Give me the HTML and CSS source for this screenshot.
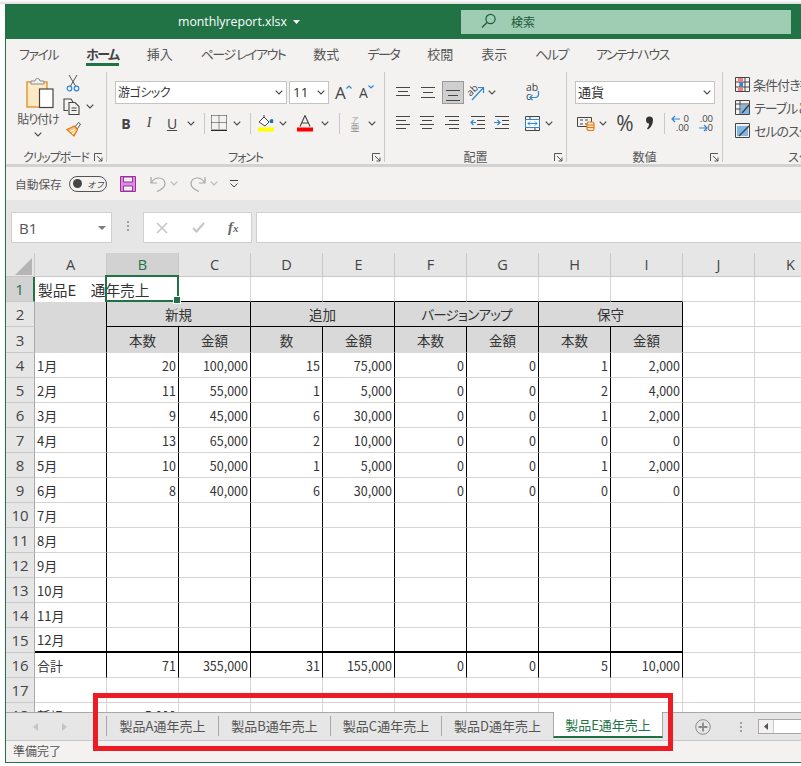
FILE: index.html
```html
<!DOCTYPE html>
<html lang="ja">
<head>
<meta charset="utf-8">
<title>monthlyreport.xlsx</title>
<link rel="stylesheet" href="styles.css">
</head>
<body>
<div class="edge"></div>
<div class="win">
  <header class="title">
    <div class="fname">monthlyreport.xlsx<svg class="caret" width="7" height="4" viewBox="0 0 7 4"><path d="M0 0h7L3.5 4z" fill="#fff"/></svg></div>
    <div class="search">
      <svg width="16" height="16" viewBox="0 0 16 16" fill="none" stroke="#1d5a38" stroke-width="1.2"><circle cx="9.5" cy="6" r="4.6"/><path d="M6 9.5L1 14.5"/></svg>
      <span>検索</span>
    </div>
  </header>
  <nav class="tabs">
    <span class="k">ファイル</span><span class="on k">ホーム</span><span>挿入</span><span class="k">ページ レイアウト</span><span>数式</span><span class="k">データ</span><span>校閲</span><span>表示</span><span class="k">ヘルプ</span><span class="k">アンテナハウス</span>
  </nav>

  <section class="ribbon">
    <div class="grp g-clip">
      <div class="clip-body">
        <div class="paste">
          <svg width="28" height="32" viewBox="0 0 28 32"><rect x="1" y="4" width="20" height="25" fill="#fde9c4" stroke="#e38a1f" stroke-width="1.3"/><path d="M5 6V3h4a2.5 2.5 0 0 1 5 0h4v3z" fill="#f3f2f1" stroke="#8a8a8a"/><rect x="13.5" y="11" width="13.5" height="18.5" fill="#fff" stroke="#444" stroke-width="1.2"/></svg>
          <span>貼り付け</span>
          <svg class="chev" width="8" height="5" viewBox="0 0 8 5"><path d="M.7.7L4 4l3.3-3.3"/></svg>
        </div>
        <div class="clip-side">
          <svg width="14" height="17" viewBox="0 0 14 17" fill="none" stroke="#555"><path d="M3 0l6.5 11M11 0L4.500 11"/><circle cx="3.500" cy="13.500" r="2.300" stroke="#2b88d8" stroke-width="1.200"/><circle cx="10.500" cy="13.500" r="2.300" stroke="#2b88d8" stroke-width="1.200"/></svg>
          <div class="side-row">
            <svg width="18" height="17" viewBox="0 0 18 17" fill="none" stroke="#444" stroke-width="1.100"><path d="M5 12.500H1V1h7l2 3"/><path d="M6 4.500h6l4 4v8H6z" fill="#f3f2f1"/><path d="M8.500 10h5M8.500 12.500h5"/></svg>
            <svg class="chev" width="8" height="5" viewBox="0 0 8 5"><path d="M.7.7L4 4l3.3-3.3"/></svg>
          </div>
          <svg width="17" height="16" viewBox="0 0 17 16"><path d="M9 6l3.500-4.500 2 1.500-3 4.700z" fill="#fff" stroke="#555"/><path d="M1 8.500L8.500 5l3 3.500L8 15z" fill="#f8c27a" stroke="#e07b16" stroke-width="1.200"/><path d="M4 10.500l5-2M6 13l3.500-3" stroke="#fff"/></svg>
        </div>
      </div>
      <div class="glabel k-label">クリップボード</div>
      <svg class="launch" width="9" height="9" viewBox="0 0 9 9" fill="none" stroke="#555"><path d="M.5 8V.5H8M3 3l5 5M8 4.500V8H4.500"/></svg>
    </div>

    <div class="grp g-font">
      <div class="row r1">
        <div class="select s-font"><span>游ゴシック</span><svg class="chev" width="8" height="5" viewBox="0 0 8 5"><path d="M.7.7L4 4l3.300-3.300"/></svg></div>
        <div class="select s-size"><span>11</span><svg class="chev" width="8" height="5" viewBox="0 0 8 5"><path d="M.7.7L4 4l3.300-3.300"/></svg></div>
        <div class="bigA a-up">A<svg width="6" height="4" viewBox="0 0 6 4" fill="none" stroke="#2b88d8" stroke-width="1.200"><path d="M.5 3.500L3 1l2.500 2.500"/></svg></div>
        <div class="bigA a-down">A<svg width="6" height="4" viewBox="0 0 6 4" fill="none" stroke="#2b88d8" stroke-width="1.200"><path d="M.5.5L3 3 5.500.5"/></svg></div>
      </div>
      <div class="row r2">
        <b class="c w22 fb">B</b><i class="c w24 fi">I</i><u class="c w22 fu">U</u>
        <span class="c w16"><svg class="chev" width="8" height="5" viewBox="0 0 8 5"><path d="M.7.7L4 4l3.300-3.300"/></svg></span>
        <span class="c w10"><i class="sep"></i></span>
        <span class="c w20"><svg width="16" height="16" viewBox="0 0 16 16" fill="none" stroke="#333" stroke-dasharray="1 1"><path d="M.5.5h15M.5.5v14M15.500.5v14M8 .5v14M.5 7.500h15"/><path d="M0 15.300h16" stroke="#111" stroke-width="1.200" stroke-dasharray="none"/></svg></span>
        <span class="c w16"><svg class="chev" width="8" height="5" viewBox="0 0 8 5"><path d="M.7.7L4 4l3.300-3.300"/></svg></span>
        <span class="c w10"><i class="sep"></i></span>
        <span class="c w22"><svg width="16" height="17" viewBox="0 0 16 17"><path d="M1 7l5-5 5 5-4 4z" fill="#fff" stroke="#444"/><path d="M6 2V0" stroke="#444"/><path d="M12 8c-1-2 0-4 2-4s1 4 1 4z" fill="#1f6fb5"/><rect y="12.500" width="16" height="4" fill="#ffff00"/></svg></span>
        <span class="c w12"><svg class="chev" width="8" height="5" viewBox="0 0 8 5"><path d="M.7.7L4 4l3.300-3.300"/></svg></span>
        <span class="c w32"><svg width="16" height="17" viewBox="0 0 16 17" fill="none" stroke="#444" stroke-width="1.100"><path d="M3 11.500L8 .5l5 11M5 8h6"/><rect y="12.500" width="16" height="4" fill="#ff0000" stroke="none"/></svg></span>
        <span class="c w8"><svg class="chev" width="8" height="5" viewBox="0 0 8 5"><path d="M.7.7L4 4l3.300-3.300"/></svg></span>
        <span class="c w20"><i class="sep"></i></span>
        <span class="c w12 phon"><span class="kana">ア</span><span class="kanji">亜</span></span>
        <span class="c w22"><svg class="chev" width="8" height="5" viewBox="0 0 8 5"><path d="M.7.7L4 4l3.300-3.300"/></svg></span>
      </div>
      <div class="glabel k-label">フォント</div>
      <svg class="launch" width="9" height="9" viewBox="0 0 9 9" fill="none" stroke="#555"><path d="M.5 8V.5H8M3 3l5 5M8 4.500V8H4.500"/></svg>
    </div>

    <div class="grp g-align">
      <div class="al-body">
        <div class="al-left">
          <div class="row r1">
            <span class="c w22"><svg width="15" height="16" viewBox="0 0 15 16" stroke="#444"><path d="M0 2.500h14M2 6.500h10M0 10.500h14"/></svg></span>
            <span class="c w28"><svg width="15" height="16" viewBox="0 0 15 16" stroke="#444"><path d="M0 2.500h14M2 7.500h10M0 12.500h14"/></svg></span>
            <span class="c w22 sel"><svg width="15" height="16" viewBox="0 0 15 16" stroke="#444"><path d="M0 5.500h14M2 10.500h10M0 15.500h14"/></svg></span>
            <span class="c w24"><svg width="18" height="16" viewBox="0 0 18 16" fill="none"><text x="0" y="9" class="ab" transform="rotate(-45 5 6)">ab</text><path d="M5 15L16 3M11 2.500h5.500V8" stroke="#2b88d8" stroke-width="1.200"/></svg></span>
            <span class="c w8"><svg class="chev" width="8" height="5" viewBox="0 0 8 5"><path d="M.7.7L4 4l3.300-3.300"/></svg></span>
          </div>
          <div class="row r2">
            <span class="c w22"><svg width="15" height="14" viewBox="0 0 15 14" stroke="#444"><path d="M0 .5h14M0 4.500h10M0 8.500h14M0 12.500h10"/></svg></span>
            <span class="c w26"><svg width="15" height="14" viewBox="0 0 15 14" stroke="#444"><path d="M0 .5h14M2 4.500h10M0 8.500h14M2 12.500h10"/></svg></span>
            <span class="c w24"><svg width="15" height="14" viewBox="0 0 15 14" stroke="#444"><path d="M0 .5h14M4 4.500h10M0 8.500h14M4 12.500h10"/></svg></span>
            <span class="c w26"><svg width="15" height="14" viewBox="0 0 15 14" fill="none" stroke="#444"><path d="M1 .5h14M7 4.500h8M7 8.500h8M1 12.500h14"/><path d="M6 6.500H1M3.500 4L1 6.500 3.500 9" stroke="#2b88d8" stroke-width="1.200"/></svg></span>
            <span class="c w22"><svg width="15" height="14" viewBox="0 0 15 14" fill="none" stroke="#444"><path d="M1 .5h14M8 4.500h7M8 8.500h7M1 12.500h14"/><path d="M0 6.500h6M3.500 4L6 6.500 3.500 9" stroke="#2b88d8" stroke-width="1.200"/></svg></span>
          </div>
        </div>
        <i class="sep tall"></i>
        <div class="al-right">
          <div class="wrap-ic"><span class="wl">ab</span><span class="wl">c</span><svg width="12" height="10" viewBox="0 0 12 10" fill="none" stroke="#2b88d8" stroke-width="1.200"><path d="M10.500 0v3.500a3 3 0 0 1-3 3H2M4.500 4L2 6.500 4.500 9"/></svg></div>
          <div class="row r2b">
            <span class="c w22"><svg width="15" height="15" viewBox="0 0 15 15" fill="none" stroke="#444"><path d="M.5.5h14v14H.5zM.5 3.500h14M.5 11.500h14M5 .5v3M10 11.500v3"/><rect x=".5" y="3.500" width="14" height="8" fill="#fff" stroke="#2b88d8"/><path d="M3 7.500h9M5 5.500l-2 2 2 2M10 5.500l2 2-2 2" stroke="#2b88d8"/></svg></span>
            <span class="c w12"><svg class="chev" width="8" height="5" viewBox="0 0 8 5"><path d="M.7.7L4 4l3.300-3.300"/></svg></span>
          </div>
        </div>
      </div>
      <div class="glabel">配置</div>
      <svg class="launch" width="9" height="9" viewBox="0 0 9 9" fill="none" stroke="#555"><path d="M.5 8V.5H8M3 3l5 5M8 4.500V8H4.500"/></svg>
    </div>

    <div class="grp g-num">
      <div class="row r1"><div class="select s-num"><span>通貨</span><svg class="chev" width="8" height="5" viewBox="0 0 8 5"><path d="M.7.7L4 4l3.300-3.300"/></svg></div></div>
      <div class="row r2">
        <span class="c w22"><svg width="18" height="15" viewBox="0 0 18 15" fill="none"><path d="M.5 1.500h14v9H.5z" stroke="#444"/><path d="M3 4h3M3 8h3M8 4h3M8 8h3" stroke="#444"/><rect x="10" y="6" width="7" height="8.500" rx="2" fill="#fbe3c5" stroke="#e07b16" stroke-width="1.200"/><path d="M10 9h7M10 11.500h7" stroke="#e07b16"/></svg></span>
        <span class="c w12"><svg class="chev" width="8" height="5" viewBox="0 0 8 5"><path d="M.7.7L4 4l3.300-3.300"/></svg></span>
        <span class="c w32 pct">%</span>
        <span class="c w16"><svg width="9" height="14" viewBox="0 0 9 14"><path d="M1 4a3.500 3.500 0 1 1 7 0c0 4-2 7.500-5 9.500L2 12.500c1.500-1.500 2-3 2-5C2 7.500 1 6 1 4z" fill="#333"/></svg></span>
        <span class="c w14"><i class="sep"></i></span>
        <span class="c w18 dec"><span class="dt">0</span><span class="db">.00</span><svg class="arr" width="9" height="8" viewBox="0 0 9 8" fill="none" stroke="#2b88d8" stroke-width="1.200"><path d="M9 4H1M4 1L1 4l3 3"/></svg></span>
        <span class="c w30 dec dec2"><span class="dt">.00</span><span class="db">.0</span><svg class="arr" width="9" height="8" viewBox="0 0 9 8" fill="none" stroke="#2b88d8" stroke-width="1.200"><path d="M0 4h8M5 1l3 3-3 3"/></svg></span>
      </div>
      <div class="glabel">数値</div>
      <svg class="launch" width="9" height="9" viewBox="0 0 9 9" fill="none" stroke="#555"><path d="M.5 8V.5H8M3 3l5 5M8 4.500V8H4.500"/></svg>
    </div>

    <div class="grp g-style">
      <div class="sty"><svg width="15" height="15" viewBox="0 0 15 15" fill="none" stroke="#444"><path d="M.5.500h14v14H.500zM.500 5h14M.500 10h14M5 .500v14M10 .500v14"/><rect x="3" y="1" width="5" height="4" fill="#f08080" stroke="none"/><rect x="3" y="10" width="5" height="4" fill="#f08080" stroke="none"/><rect x="5" y="5" width="3" height="5" fill="#2b88d8" stroke="none"/></svg><span>条件付き書式</span></div>
      <div class="sty"><svg width="16" height="15" viewBox="0 0 16 15" fill="none" stroke="#444"><path d="M.5.500h14v14H.500zM.500 4h14M5 .500v14M.500 9h5"/><rect x="6" y="5" width="8" height="9" fill="#7fb8e6" stroke="none"/><path d="M7 13l7-8" stroke="#444" stroke-width="1.500"/></svg><span>テーブルとして書式設定</span></div>
      <div class="sty"><svg width="16" height="15" viewBox="0 0 16 15" fill="none" stroke="#444"><path d="M.5.500h14v14H.500z"/><rect x="2" y="3" width="11" height="10" fill="#7fb8e6" stroke="none"/><path d="M4 13l10-10" stroke="#444" stroke-width="1.500"/></svg><span>セルのスタイル</span></div>
      <div class="glabel">スタイル</div>
    </div>
  </section>

  <div class="qat">
    <span class="auto">自動保存</span>
    <span class="toggle"><i></i><em>オフ</em></span>
    <svg class="q-save" width="16" height="16" viewBox="0 0 16 16"><path d="M.5.500h15v15H.500z" fill="#d58fd6" stroke="#a02ba5"/><path d="M3.500 1h9v5h-9z" fill="#f3f2f1" stroke="#a02ba5"/><path d="M3.500 15v-5h9v5z" fill="#f3f2f1" stroke="#a02ba5"/></svg>
    <svg class="q-undo" width="16" height="16" viewBox="0 0 16 16" fill="none" stroke="#a6a6a6" stroke-width="1.200"><path d="M1 1v6h6"/><path d="M1.500 6.500C3 3.500 6 2 9 2c3.500 0 6 2.500 6 5.500 0 3-3 6-8 8"/></svg>
    <svg class="chev q-c1" width="8" height="5" viewBox="0 0 8 5"><path d="M.7.7L4 4l3.300-3.300"/></svg>
    <svg class="q-redo" width="16" height="16" viewBox="0 0 16 16" fill="none" stroke="#a6a6a6" stroke-width="1.200"><path d="M15 1v6H9"/><path d="M14.500 6.500C13 3.500 10 2 7 2 3.500 2 1 4.500 1 7.500c0 3 3 6 8 8"/></svg>
    <svg class="chev q-c2" width="8" height="5" viewBox="0 0 8 5"><path d="M.7.7L4 4l3.300-3.300"/></svg>
    <svg class="q-more" width="8" height="8" viewBox="0 0 8 8" fill="none" stroke="#444"><path d="M0 .5h8"/><path d="M.5 3.500L4 7l3.500-3.500"/></svg>
  </div>

  <div class="fbar">
    <div class="namebox"><span>B1</span><svg width="8" height="4" viewBox="0 0 8 4"><path d="M0 0h8L4 4z" fill="#7a7a7a"/></svg></div>
    <div class="dots"><i></i><i></i><i></i></div>
    <div class="fxbox">
      <svg width="12" height="12" viewBox="0 0 12 12" fill="none" stroke="#c4c4c4" stroke-width="1.500"><path d="M1 1l10 10M11 1L1 11"/></svg>
      <svg width="13" height="11" viewBox="0 0 13 11" fill="none" stroke="#c4c4c4" stroke-width="2"><path d="M1 6l3.500 3.500L12 1"/></svg>
      <span class="fx">f<small>x</small></span>
    </div>
    <div class="finput"></div>
  </div>

  <div class="sheet">
    <table class="grid">
      <colgroup><col class="ch"><col class="cc"><col class="cc"><col class="cc"><col class="cc"><col class="cc"><col class="cc"><col class="cc"><col class="cc"><col class="cc"><col class="cc"><col class="cc"></colgroup>
      <thead>
        <tr class="hd"><th class="corner"><svg width="17" height="17" viewBox="0 0 17 17"><path d="M17 0v17H0z" fill="#b5b5b5"/></svg></th><th>A</th><th class="hsel">B</th><th>C</th><th>D</th><th>E</th><th>F</th><th>G</th><th>H</th><th>I</th><th>J</th><th>K</th></tr>
      </thead>
      <tbody>
        <tr><th class="rsel">1</th><td class="t a1">製品E　通年売上</td><td class="top selc"><i class="cursor"></i></td><td class="top"></td><td class="top"></td><td class="top"></td><td class="top"></td><td class="top"></td><td class="top"></td><td class="top"></td><td></td><td></td></tr>
        <tr class="h1"><th>2</th><td class="gray" rowspan="2"></td><td class="hc" colspan="2">新規</td><td class="hc" colspan="2">追加</td><td class="hc hk" colspan="2">バージョンアップ</td><td class="hc" colspan="2">保守</td><td></td><td></td></tr>
        <tr class="h2"><th>3</th><td class="hc2">本数</td><td class="hc2">金額</td><td class="hc2">数</td><td class="hc2">金額</td><td class="hc2">本数</td><td class="hc2">金額</td><td class="hc2">本数</td><td class="hc2">金額</td><td></td><td></td></tr>
        <tr class="d"><th>4</th><td>1月</td><td>20</td><td>100,000</td><td>15</td><td>75,000</td><td>0</td><td>0</td><td>1</td><td>2,000</td><td></td><td></td></tr>
        <tr class="d"><th>5</th><td>2月</td><td>11</td><td>55,000</td><td>1</td><td>5,000</td><td>0</td><td>0</td><td>2</td><td>4,000</td><td></td><td></td></tr>
        <tr class="d"><th>6</th><td>3月</td><td>9</td><td>45,000</td><td>6</td><td>30,000</td><td>0</td><td>0</td><td>1</td><td>2,000</td><td></td><td></td></tr>
        <tr class="d"><th>7</th><td>4月</td><td>13</td><td>65,000</td><td>2</td><td>10,000</td><td>0</td><td>0</td><td>0</td><td>0</td><td></td><td></td></tr>
        <tr class="d"><th>8</th><td>5月</td><td>10</td><td>50,000</td><td>1</td><td>5,000</td><td>0</td><td>0</td><td>1</td><td>2,000</td><td></td><td></td></tr>
        <tr class="d"><th>9</th><td>6月</td><td>8</td><td>40,000</td><td>6</td><td>30,000</td><td>0</td><td>0</td><td>0</td><td>0</td><td></td><td></td></tr>
        <tr class="d"><th>10</th><td>7月</td><td></td><td></td><td></td><td></td><td></td><td></td><td></td><td></td><td></td><td></td></tr>
        <tr class="d"><th>11</th><td>8月</td><td></td><td></td><td></td><td></td><td></td><td></td><td></td><td></td><td></td><td></td></tr>
        <tr class="d"><th>12</th><td>9月</td><td></td><td></td><td></td><td></td><td></td><td></td><td></td><td></td><td></td><td></td></tr>
        <tr class="d"><th>13</th><td>10月</td><td></td><td></td><td></td><td></td><td></td><td></td><td></td><td></td><td></td><td></td></tr>
        <tr class="d"><th>14</th><td>11月</td><td></td><td></td><td></td><td></td><td></td><td></td><td></td><td></td><td></td><td></td></tr>
        <tr class="d last"><th>15</th><td>12月</td><td></td><td></td><td></td><td></td><td></td><td></td><td></td><td></td><td></td><td></td></tr>
        <tr class="d"><th>16</th><td>合計</td><td>71</td><td>355,000</td><td>31</td><td>155,000</td><td>0</td><td>0</td><td>5</td><td>10,000</td><td></td><td></td></tr>
        <tr class="p"><th>17</th><td></td><td></td><td></td><td></td><td></td><td></td><td></td><td></td><td></td><td></td><td></td></tr>
        <tr class="p"><th>18</th><td>新規</td><td>5,000</td><td></td><td></td><td></td><td></td><td></td><td></td><td></td><td></td><td></td></tr>
      </tbody>
    </table>
  </div>

  <div class="sheetbar">
    <div class="nav">
      <svg width="5" height="8" viewBox="0 0 5 8"><path d="M5 0v8L0 4z" fill="#c4c4c4"/></svg>
      <svg width="5" height="8" viewBox="0 0 5 8"><path d="M0 0v8l5-4z" fill="#c4c4c4"/></svg>
    </div>
    <div class="stabs">
      <span class="st">製品A通年売上</span><span class="st">製品B通年売上</span><span class="st">製品C通年売上</span><span class="st">製品D通年売上</span><span class="st act">製品E通年売上</span>
    </div>
    <svg class="plus" width="16" height="16" viewBox="0 0 16 16" fill="none" stroke="#8a8a8a"><circle cx="8" cy="8" r="7.300"/><path d="M8 3.500v9M3.500 8h9" stroke-width="1.800"/></svg>
    <div class="dots sd"><i></i><i></i><i></i></div>
    <div class="hscroll"><span class="hbtn"><svg width="4" height="7" viewBox="0 0 4 7"><path d="M4 0v7L0 3.500z" fill="#555"/></svg></span></div>
  </div>
  <footer class="status">準備完了</footer>
  <div class="redbox"></div>
</div>
</body>
</html>
```

FILE: styles.css
```css
* { box-sizing: border-box; }
html, body { margin: 0; padding: 0; background: #fff; overflow: hidden; }
body { width: 801px; height: 766px; font-family: "Noto Sans CJK JP", "Noto Sans", sans-serif; color: #444; }
.edge { height: 4px; background: linear-gradient(#fff, #dcdcdc); }
.win { position: relative; margin-left: 5px; width: 796px; height: 759px; border-left: 1px solid #217346; border-bottom: 1px solid #217346; background: #f3f2f1; overflow: hidden; display: flex; flex-direction: column; }
svg { display: block; flex: none; }

.title { height: 35px; background: #217346; flex: none; display: flex; }
.fname { margin-left: 172px; width: 283px; font: 12.300px/34px "Open Sans", sans-serif; color: #fff; display: flex; align-items: center; }
.caret { margin-left: 6px; }
.search { margin-top: 6px; width: 330px; height: 24px; background: #9fcdb3; display: flex; align-items: center; padding: 0 0 2px 20px; gap: 14px; font-size: 12px; color: #1d5a38; }

.tabs { height: 33px; flex: none; display: flex; padding-left: 13px; gap: 28px; font-size: 13px; font-feature-settings: "palt"; line-height: 30px; color: #555; }
.tabs span { position: relative; white-space: nowrap; }
.tabs .k { letter-spacing: -1.500px; }
.tabs .on { font-weight: 700; color: #444; }
.tabs .on::after { content: ""; position: absolute; left: 0; right: 0; top: 24px; height: 3px; background: #217346; }

.ribbon { height: 95px; flex: none; display: flex; border-bottom: 3px solid #d2d2d2; }
.grp { position: relative; height: 90px; border-right: 1px solid #c8c8c8; flex: none; display: flex; flex-direction: column; }
.g-clip { width: 101px; }
.g-font { width: 278px; padding-left: 8px; }
.g-align { width: 182px; padding-left: 7px; }
.g-num { width: 156px; padding-left: 8px; }
.g-style { width: 80px; padding-left: 12px; border-right: 0; }
.glabel { position: absolute; left: 0; right: 0; top: 76px; text-align: center; font-size: 12px; line-height: 18px; font-feature-settings: "palt"; color: #555; white-space: nowrap; }
.k-label { letter-spacing: -1.200px; }
.launch { position: absolute; right: 3px; top: 81px; }

.clip-body { display: flex; padding: 6px 0 0 10px; }
.paste { width: 44px; display: flex; flex-direction: column; align-items: center; font-size: 12px; line-height: 16px; font-feature-settings: "palt"; letter-spacing: -1px; white-space: nowrap; color: #555; }
.paste svg:first-child { margin: 0 0 0 4px; }
.paste span { margin-top: 1px; }
.paste .chev { margin-top: 5px; }
.clip-side { margin: -3px 0 0 3px; display: flex; flex-direction: column; gap: 6px; align-items: flex-start; }
.clip-side > svg { margin-left: 3px; }
.side-row { display: flex; align-items: center; gap: 5px; }

.chev { fill: none; stroke: #444; stroke-width: 1.100; }
.row { display: flex; align-items: center; }
.r1 { margin-top: 9px; height: 23px; }
.r2 { margin-top: 8px; height: 22px; }
.c { display: flex; align-items: center; justify-content: center; flex: none; height: 22px; text-decoration: none; }
.w8 { width: 8px; } .w10 { width: 10px; } .w12 { width: 12px; } .w14 { width: 14px; } .w16 { width: 16px; } .w18 { width: 18px; }
.w20 { width: 20px; } .w22 { width: 22px; } .w24 { width: 24px; } .w26 { width: 26px; } .w28 { width: 28px; } .w30 { width: 30px; } .w32 { width: 32px; }
.sep { display: block; width: 1px; height: 21px; background: #c8c8c8; }
.sep.tall { height: 59px; margin: 7px 5px 0 4px; }

.select { height: 23px; background: #fff; border: 1px solid #c4c4c4; display: flex; align-items: center; justify-content: space-between; padding: 0 3px 2px 2px; font-size: 13px; color: #333; flex: none; }
.select .chev { margin-top: 2px; }
.s-font { width: 172px; margin-right: 2px; font-size: 12px; font-feature-settings: "palt"; letter-spacing: -.5px; }
.s-size { width: 40px; padding-left: 3px; font: 13.500px "Open Sans", sans-serif; }
.s-num { width: 140px; }
.bigA { display: flex; font: 17px/22px "Open Sans", sans-serif; color: #444; width: 16px; position: relative; }
.bigA svg { margin-top: 3px; flex: none; }
.a-up { margin-left: 6px; }
.a-down { margin-left: 8px; font-size: 14px; }
.fb { font: 700 14px "Open Sans", sans-serif; }
.fi { font: italic 14px "Liberation Serif", serif; }
.fu { font: 14px "Open Sans", sans-serif; text-decoration: underline; }
.phon { flex-direction: column; font-size: 7px; line-height: 8px; color: #999; }
.phon .kanji { font-size: 9px; line-height: 9px; color: #888; }

.sel { height: 23px; background: #cfcfcf; border: 1px solid #999; }
.ab { font: 10px "Open Sans", sans-serif; fill: #444; }
.al-body { display: flex; }
.al-left { width: 120px; flex: none; }
.al-right { flex: none; width: 50px; }
.wrap-ic { margin: 9px 0 0 1px; height: 23px; position: relative; font: 10.500px/9px "Open Sans", sans-serif; color: #444; padding-left: 4px; padding-top: 2px; display: flex; flex-direction: column; align-items: flex-start; }
.wrap-ic svg { position: absolute; left: 6px; top: 10px; }
.r2b { margin-top: 8px; height: 22px; }
.pct { font: 21px "Open Sans", sans-serif; color: #444; }
.dec { position: relative; font: 9.500px/9px "Open Sans", sans-serif; color: #444; }
.dec .dt { position: absolute; right: 0; top: 2px; }
.dec .db { position: absolute; right: 0; top: 11px; }
.dec .arr { position: absolute; left: 0; top: 3px; }
.dec2 .dt { right: 6px; }
.dec2 .db { right: 6px; }
.dec2 .arr { left: 10px; top: 12px; }

.sty { display: flex; align-items: center; gap: 3px; height: 23px; font-size: 13px; font-feature-settings: "palt"; white-space: nowrap; color: #555; }
.sty:first-child { margin-top: 1px; }
.sty span { letter-spacing: -1px; }
.g-style .glabel { left: 65px; right: auto; text-align: left; }

.qat { height: 33px; flex: none; display: flex; align-items: center; padding-left: 9px; font-size: 11.700px; }
.auto { width: 54px; white-space: nowrap; color: #555; }
.toggle { width: 38px; height: 16px; border: 1px solid #555; border-radius: 8px; display: flex; align-items: center; padding-left: 3px; }
.toggle i { width: 9px; height: 9px; border-radius: 50%; background: #444; }
.toggle em { margin-left: 5px; font-size: 8.500px; line-height: 12px; font-style: italic; color: #444; white-space: nowrap; }
.q-save { margin-left: 13px; }
.q-undo { margin-left: 14px; }
.q-c1 { margin-left: 4px; stroke: #b8b8b8; }
.q-redo { margin-left: 12px; }
.q-c2 { margin-left: 4px; stroke: #b8b8b8; }
.q-more { margin-left: 12px; }

.fbar { height: 53px; flex: none; background: #e6e6e6; display: flex; padding: 12px 0 10px 5px; align-items: flex-start; }
.namebox { width: 101px; height: 31px; background: #fff; border: 1px solid #d0d0d0; display: flex; align-items: center; justify-content: space-between; padding: 0 5px 0 7px; font: 15px "Open Sans", sans-serif; color: #555; }
.dots { display: flex; flex-direction: column; gap: 2px; width: 31px; align-items: center; padding-top: 9px; }
.dots i { width: 2px; height: 2px; background: #a0a0a0; display: block; }
.fxbox { width: 109px; height: 31px; background: #fff; border: 1px solid #d0d0d0; display: flex; align-items: center; padding-left: 12px; gap: 24px; }
.fx { font: italic 700 15px "Liberation Serif", serif; color: #666; white-space: nowrap; margin-left: -1px; }
.fx small { font-size: 11px; }
.finput { flex: 1; height: 31px; margin-left: 4px; background: #fff; border: 1px solid #d0d0d0; border-right: 0; }

.sheet { height: 459px; flex: none; background: #fff; overflow: hidden; }
.grid { border-collapse: separate; border-spacing: 0; table-layout: fixed; width: 821px; font-size: 13px; color: #333; }
.ch { width: 29px; }
.cc { width: 72px; }
.grid th { background: #e6e6e6; font: 14.500px "Open Sans", sans-serif; color: #444; padding: 0; border-right: 1px solid #c8c8c8; border-bottom: 1px solid #c8c8c8; }
.grid tbody th { border-right-color: #a8a8a8; font-size: 15px; }
.hd { height: 24px; }
.grid .corner svg { margin: 3px 0 0 9px; }
.grid .hsel { background: #d2d2d2; color: #217346; }
.grid tbody .rsel { background: #d2d2d2; color: #217346; border-right: 2px solid #217346; }
.grid tbody tr { height: 25px; }
.grid tbody .h2 { height: 26px; }
.grid td { padding: 0 2px; white-space: nowrap; border-right: 1px solid #d4d4d4; border-bottom: 1px solid #d4d4d4; text-align: right; overflow: visible; }
.grid td:nth-child(2) { text-align: left; }
.grid .a1 { border-right: 0; font-size: 14.700px; padding-left: 3px; text-align: left; border-bottom-color: transparent; }
.grid .top { border-bottom-color: #000; }
.selc { position: relative; }
.cursor { position: absolute; left: -2px; top: -2px; width: 74px; height: 27px; border: 2px solid #217346; }
.cursor::after { content: ""; position: absolute; right: -4px; bottom: -4px; width: 6px; height: 6px; background: #217346; border: 1px solid #fff; }
.grid .gray { background: #d9d9d9; border-right-color: #000; border-bottom-color: #d9d9d9; }
.grid td.hc { background: #d9d9d9; text-align: center; border-right-color: #000; border-bottom-color: #000; font-size: 13.500px; }
.grid td.hk { font-feature-settings: "palt"; letter-spacing: -.8px; }
.grid td.hc2 { background: #d9d9d9; text-align: center; border-right-color: #000; border-bottom-color: #d9d9d9; font-size: 13.500px; }
.d td { font-size: 12.500px; }
.d td:nth-child(-n+10) { border-right-color: #000; }
.grid .d td:nth-child(2), .grid .p td:nth-child(2) { padding-left: 2px; font-size: 13px; }
.last td:nth-child(-n+10) { border-bottom: 2px solid #000; }
.p td { font-size: 12.500px; }

.sheetbar { height: 29px; flex: none; position: relative; z-index: 1; background: #e6e6e6; border-top: 1px solid #a8a8a8; border-bottom: 1px solid #c8c8c8; display: flex; align-items: center; }
.nav { width: 100px; display: flex; padding-left: 27px; gap: 24px; flex: none; }
.stabs { display: flex; flex: none; width: 557px; height: 27px; align-items: flex-start; font-size: 13px; }
.st { width: 112px; height: 20px; margin-top: 3px; border-left: 1px solid #a8a8a8; text-align: center; line-height: 20px; white-space: nowrap; color: #555; flex: none; }
.st:nth-child(3) { width: 111px; }
.st.act { width: 110px; height: 26px; margin-top: -1px; padding-top: 3px; background: #fff; color: #217346; border: 1px solid #a8a8a8; border-top: 0; border-bottom: 2px solid #217346; }
.plus { margin-left: 32px; }
.dots.sd { width: auto; padding: 0; margin-left: 29px; }
.hscroll { margin-left: 16px; width: 60px; height: 15px; background: #fff; border: 1px solid #a8a8a8; border-right: 0; flex: none; }
.hbtn { display: flex; align-items: center; justify-content: center; width: 15px; height: 13px; border-right: 1px solid #c8c8c8; background: #f3f2f1; }

.status { height: 21px; flex: none; background: #f3f2f1; font-size: 12px; line-height: 20px; padding-left: 7px; color: #555; }
.redbox { position: absolute; left: 87px; top: 689px; width: 580px; height: 58px; border: 5px solid #ed1c24; z-index: 2; }
```
